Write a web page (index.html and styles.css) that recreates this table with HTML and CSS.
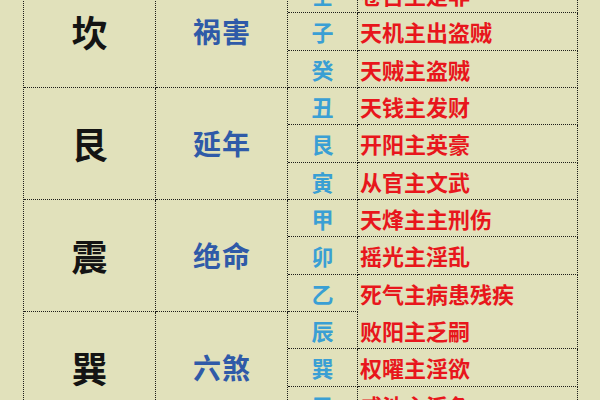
FILE: index.html
```html
<!DOCTYPE html>
<html lang="zh">
<head>
<meta charset="utf-8">
<link rel="stylesheet" href="styles.css">
</head>
<body>
<div class="grid">
  <div class="gua g1">坎</div>
  <div class="star g1">祸害</div>
  <div class="mt">壬</div><div class="desc">卷舌主是非</div>
  <div class="mt">子</div><div class="desc">天机主出盗贼</div>
  <div class="mt">癸</div><div class="desc">天贼主盗贼</div>

  <div class="gua g2">艮</div>
  <div class="star g2">延年</div>
  <div class="mt">丑</div><div class="desc">天钱主发财</div>
  <div class="mt">艮</div><div class="desc">开阳主英豪</div>
  <div class="mt">寅</div><div class="desc">从官主文武</div>

  <div class="gua g3">震</div>
  <div class="star g3">绝命</div>
  <div class="mt">甲</div><div class="desc">天烽主主刑伤</div>
  <div class="mt">卯</div><div class="desc">摇光主淫乱</div>
  <div class="mt">乙</div><div class="desc nob">死气主病患残疾</div>

  <div class="gua g4">巽</div>
  <div class="star g4">六煞</div>
  <div class="mt">辰</div><div class="desc">败阳主乏嗣</div>
  <div class="mt">巽</div><div class="desc">权曜主淫欲</div>
  <div class="mt">巳</div><div class="desc">咸池主淫色</div>
</div>
</body>
</html>
```

FILE: styles.css
```css
html, body {
  margin: 0;
  padding: 0;
  background: #e1e1bb;
  width: 600px;
  height: 400px;
  overflow: hidden;
}

.grid {
  display: grid;
  grid-template-columns: 132px 132px 70px 220px;
  grid-auto-rows: 37.333px;
  margin-top: -24px;
  margin-left: 23px;
  width: max-content;
  border-left: 1px dotted #1e1e1a;
  font-family: "Noto Sans CJK SC", sans-serif;
  font-weight: 700;
}

.grid > div {
  box-sizing: border-box;
  border-right: 1px dotted #1e1e1a;
  border-bottom: 1px dotted #1e1e1a;
  display: flex;
  align-items: center;
  line-height: 1;
}

.gua, .star {
  grid-row: span 3;
  justify-content: center;
}

.g1 { grid-column: auto; }

.gua {
  grid-column: 1;
  font-size: 36px;
  color: #141414;
  font-weight: 700;
}

.star {
  grid-column: 2;
  font-size: 28px;
  color: #2f5aa8;
  letter-spacing: 1px;
  padding-left: 1px;
}

.mt {
  grid-column: 3;
  justify-content: center;
  font-size: 22px;
  color: #3a9fd4;
}

.desc {
  grid-column: 4;
  font-size: 22px;
  color: #e8161c;
  padding-left: 2px;
}

.grid > .nob {
  border-bottom-color: transparent;
}
```
